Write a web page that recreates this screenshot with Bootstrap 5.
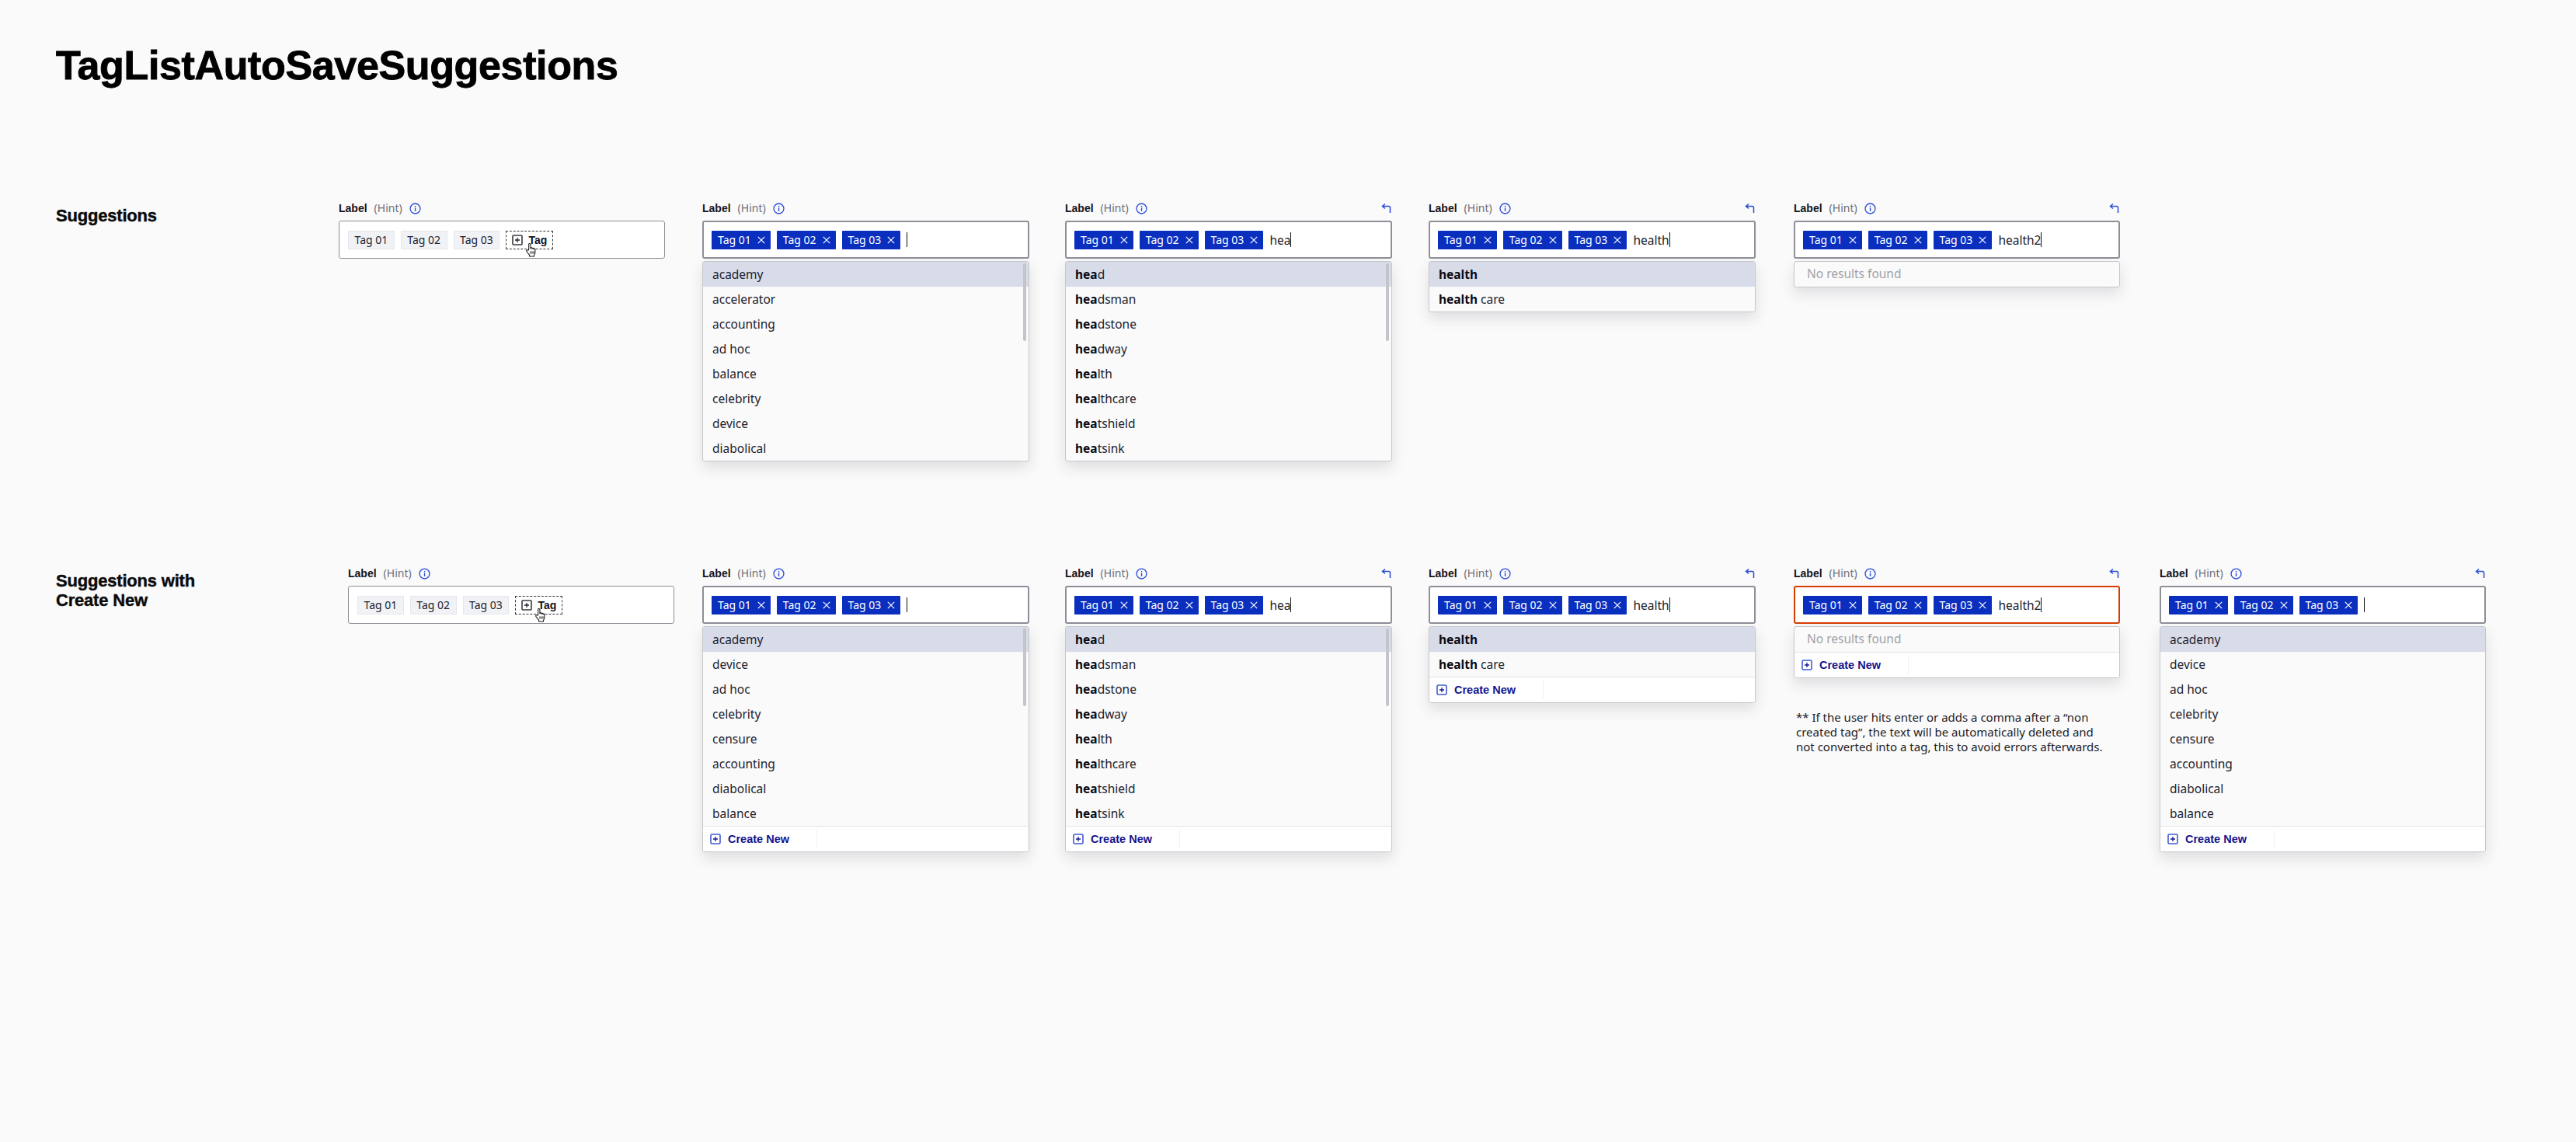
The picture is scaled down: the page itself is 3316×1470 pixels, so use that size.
<!DOCTYPE html>
<html lang="en"><head><meta charset="utf-8"><title>TagListAutoSaveSuggestions</title>
<link href="https://cdn.jsdelivr.net/npm/bootstrap@5.3.0/dist/css/bootstrap.min.css" rel="stylesheet">
<style>
body{background:#fafafa;color:#1c1c28;font-family:"Noto Sans","Liberation Sans",sans-serif;font-size:16px;min-height:1470px}
.page-wrap{padding:54px 0 0 72px}
.page-title{font:700 52px/60px "Liberation Sans",sans-serif;color:#000;margin:0 0 144px;letter-spacing:-.36px;-webkit-text-stroke:.9px #000}
.demo-row{display:grid;height:470px;align-items:start}
.demo-a{grid-template-columns:364px 468px 467px 468px 470px 420px}
.demo-b{grid-template-columns:376px 456px 467px 468px 470px 471px 420px}
.sec-name{font:700 22px/25px "Liberation Sans",sans-serif;color:#0a0a0a;padding-top:7px;margin:0;letter-spacing:-.2px;-webkit-text-stroke:.4px #0a0a0a}
.fld{width:421px}
.fld-w{width:420px}
.fld-head{height:26px;padding-bottom:6px;font-size:14px;line-height:20px}
.lab{font-family:"Liberation Sans",sans-serif;font-weight:700;font-size:14px;color:#14141e;margin-right:9px}
.hnt{color:#6d6e78;margin-right:9px}
.box{height:49px;background:#fff;border:2px solid #8e8f98;border-radius:3px;padding:0 10px;font-size:16px}
.box-idle{border-width:1px;border-color:#8e8f98;padding:0 11px}
.box-err{border-color:#d63c00}
.tg{height:24px;font-size:14px;line-height:22px;padding:0 7.5px;white-space:nowrap}
.tg-on{background:#0a2fbf;color:#fff;border-radius:1px;gap:8px;padding:0 7px 0 8px}
.tg-off{background:#f1f2f6;border:1px solid #e6e7ec;color:#22222e}
.tg-add{position:relative;border:1px dashed #333;padding:0 7px;font-weight:700;font-family:"Liberation Sans",sans-serif;font-size:14px;gap:7px;color:#14141e}
.hand{position:absolute;left:24px;top:14px}
.caret-bar{width:1px;height:19px;background:#111;margin-left:-8px}
.caret-free{margin-left:0}
.typed{line-height:24px;font-size:15.5px}
.sugg{margin-top:3px;border:1px solid #c6c7cc;border-radius:3px;background:#fafafa;box-shadow:0 8px 18px rgba(40,40,60,.13);overflow:hidden;position:relative}
.sugg .list-group-item{height:32px;line-height:32px;padding:0 12px;background:transparent;border:0;border-radius:0;font-size:15.5px;color:#22222e}
.sugg .list-group-item.hit{background:#d8dbe8}
.sugg b{font-weight:700;color:#0a0a14}
.none-row{height:32px;line-height:31px;padding:0 16px;color:#a0a1a8;font-size:15.5px}
.sbar{position:absolute;right:3px;top:2px;width:4px;height:100px;background:#c4c5ca;border-radius:2px}
.new-row{height:33px;background:#fff;border-top:1px solid #e2e3e6;padding-left:9px;gap:9px;font:700 14.5px/1 "Liberation Sans",sans-serif;color:#14148c}
.new-sep{width:1px;height:24px;background:#f0f0f2;margin-left:26px}
.foot-note{margin:41px 0 0 3px;font-size:15px;line-height:19px;color:#1c1c28;width:408px}
</style></head><body>
<svg width="0" height="0" class="d-none"><defs>
<symbol id="i-info" viewBox="0 0 16 16"><circle cx="8" cy="8" r="6.9" fill="none" stroke="#2a4bd7" stroke-width="1.4"/><rect x="7.3" y="7" width="1.5" height="4.6" fill="#2a4bd7"/><rect x="7.3" y="4.2" width="1.5" height="1.6" fill="#2a4bd7"/></symbol>
<symbol id="i-undo" viewBox="0 0 14 14"><path d="M5 1.5 1.5 4.5 5 7.5M1.5 4.5h8.2c1.2 0 1.8.7 1.8 1.8V13" fill="none" stroke="#2a4bd7" stroke-width="1.5"/></symbol>
<symbol id="i-x" viewBox="0 0 10 10"><path d="M.8.8l8.4 8.4M9.2.8.8 9.2" stroke="#fff" stroke-width="1.2" fill="none"/></symbol>
<symbol id="i-plus" viewBox="0 0 14 14"><rect x="1" y="1" width="12" height="12" rx="1" fill="none" stroke="#3a3a44" stroke-width="1.6"/><path d="M7 4v6M4 7h6" stroke="#1c1c28" stroke-width="1.3"/></symbol>
<symbol id="i-new" viewBox="0 0 14 14"><rect x="1" y="1" width="12" height="12" rx="1.5" fill="none" stroke="#3f5bd6" stroke-width="1.6"/><path d="M7 4v6M4 7h6" stroke="#14148c" stroke-width="1.3"/></symbol>
<symbol id="i-hand" viewBox="0 0 16 20"><path d="M5 10V2.6c0-1.6 2.4-1.6 2.4 0V8c0-1.3 2.2-1.3 2.2 0v.6c0-1.2 2.1-1.2 2.1 0v.7c0-1.1 2-1 2 .2v4.3c0 1.6-.6 2.5-1.4 3.6V19H6v-1.6c-1.2-1.5-3-3.6-4-5.2-.9-1.5.7-2.6 1.8-1.4z" fill="#fff" stroke="#111" stroke-width="1.1" stroke-linejoin="round"/><path d="M7.4 12v3.5M9.6 12v3.5M11.7 12v3.5" stroke="#111" stroke-width="1"/></symbol>
</defs></svg>
<main class="page-wrap">
<h1 class="page-title">TagListAutoSaveSuggestions</h1>

<section class="demo-row demo-a">
<h2 class="sec-name">Suggestions</h2>
<div class="fld-w">
<div class="fld-head d-flex align-items-center"><span class="lab">Label</span><span class="hnt">(Hint)</span><svg width="15" height="15"><use href="#i-info"/></svg></div>
<div class="box box-idle d-flex align-items-center gap-2"><span class="tg tg-off">Tag 01</span><span class="tg tg-off">Tag 02</span><span class="tg tg-off">Tag 03</span><span class="tg tg-add d-inline-flex align-items-center"><svg width="14" height="14"><use href="#i-plus"/></svg>Tag<svg class="hand" width="15" height="19"><use href="#i-hand"/></svg></span></div>
</div>
<div class="fld">
<div class="fld-head d-flex align-items-center"><span class="lab">Label</span><span class="hnt">(Hint)</span><svg width="15" height="15"><use href="#i-info"/></svg></div>
<div class="box d-flex align-items-center gap-2"><span class="tg tg-on d-inline-flex align-items-center">Tag 01<svg width="10" height="10"><use href="#i-x"/></svg></span><span class="tg tg-on d-inline-flex align-items-center">Tag 02<svg width="10" height="10"><use href="#i-x"/></svg></span><span class="tg tg-on d-inline-flex align-items-center">Tag 03<svg width="10" height="10"><use href="#i-x"/></svg></span><span class="caret-bar caret-free"></span></div>
<div class="sugg"><div class="list-group"><div class="list-group-item hit">academy</div><div class="list-group-item">accelerator</div><div class="list-group-item">accounting</div><div class="list-group-item">ad hoc</div><div class="list-group-item">balance</div><div class="list-group-item">celebrity</div><div class="list-group-item">device</div><div class="list-group-item">diabolical</div></div><span class="sbar"></span></div>
</div>
<div class="fld">
<div class="fld-head d-flex align-items-center"><span class="lab">Label</span><span class="hnt">(Hint)</span><svg width="15" height="15"><use href="#i-info"/></svg><svg class="ms-auto" width="14" height="14"><use href="#i-undo"/></svg></div>
<div class="box d-flex align-items-center gap-2"><span class="tg tg-on d-inline-flex align-items-center">Tag 01<svg width="10" height="10"><use href="#i-x"/></svg></span><span class="tg tg-on d-inline-flex align-items-center">Tag 02<svg width="10" height="10"><use href="#i-x"/></svg></span><span class="tg tg-on d-inline-flex align-items-center">Tag 03<svg width="10" height="10"><use href="#i-x"/></svg></span><span class="typed">hea</span><span class="caret-bar"></span></div>
<div class="sugg"><div class="list-group"><div class="list-group-item hit"><b>hea</b>d</div><div class="list-group-item"><b>hea</b>dsman</div><div class="list-group-item"><b>hea</b>dstone</div><div class="list-group-item"><b>hea</b>dway</div><div class="list-group-item"><b>hea</b>lth</div><div class="list-group-item"><b>hea</b>lthcare</div><div class="list-group-item"><b>hea</b>tshield</div><div class="list-group-item"><b>hea</b>tsink</div></div><span class="sbar"></span></div>
</div>
<div class="fld">
<div class="fld-head d-flex align-items-center"><span class="lab">Label</span><span class="hnt">(Hint)</span><svg width="15" height="15"><use href="#i-info"/></svg><svg class="ms-auto" width="14" height="14"><use href="#i-undo"/></svg></div>
<div class="box d-flex align-items-center gap-2"><span class="tg tg-on d-inline-flex align-items-center">Tag 01<svg width="10" height="10"><use href="#i-x"/></svg></span><span class="tg tg-on d-inline-flex align-items-center">Tag 02<svg width="10" height="10"><use href="#i-x"/></svg></span><span class="tg tg-on d-inline-flex align-items-center">Tag 03<svg width="10" height="10"><use href="#i-x"/></svg></span><span class="typed">health</span><span class="caret-bar"></span></div>
<div class="sugg"><div class="list-group"><div class="list-group-item hit"><b>health</b></div><div class="list-group-item"><b>health</b> care</div></div></div>
</div>
<div class="fld-w">
<div class="fld-head d-flex align-items-center"><span class="lab">Label</span><span class="hnt">(Hint)</span><svg width="15" height="15"><use href="#i-info"/></svg><svg class="ms-auto" width="14" height="14"><use href="#i-undo"/></svg></div>
<div class="box d-flex align-items-center gap-2"><span class="tg tg-on d-inline-flex align-items-center">Tag 01<svg width="10" height="10"><use href="#i-x"/></svg></span><span class="tg tg-on d-inline-flex align-items-center">Tag 02<svg width="10" height="10"><use href="#i-x"/></svg></span><span class="tg tg-on d-inline-flex align-items-center">Tag 03<svg width="10" height="10"><use href="#i-x"/></svg></span><span class="typed">health2</span><span class="caret-bar"></span></div>
<div class="sugg"><div class="none-row">No results found</div></div>
</div>
</section>

<section class="demo-row demo-b">
<h2 class="sec-name">Suggestions with<br>Create New</h2>
<div class="fld-w">
<div class="fld-head d-flex align-items-center"><span class="lab">Label</span><span class="hnt">(Hint)</span><svg width="15" height="15"><use href="#i-info"/></svg></div>
<div class="box box-idle d-flex align-items-center gap-2"><span class="tg tg-off">Tag 01</span><span class="tg tg-off">Tag 02</span><span class="tg tg-off">Tag 03</span><span class="tg tg-add d-inline-flex align-items-center"><svg width="14" height="14"><use href="#i-plus"/></svg>Tag<svg class="hand" width="15" height="19"><use href="#i-hand"/></svg></span></div>
</div>
<div class="fld">
<div class="fld-head d-flex align-items-center"><span class="lab">Label</span><span class="hnt">(Hint)</span><svg width="15" height="15"><use href="#i-info"/></svg></div>
<div class="box d-flex align-items-center gap-2"><span class="tg tg-on d-inline-flex align-items-center">Tag 01<svg width="10" height="10"><use href="#i-x"/></svg></span><span class="tg tg-on d-inline-flex align-items-center">Tag 02<svg width="10" height="10"><use href="#i-x"/></svg></span><span class="tg tg-on d-inline-flex align-items-center">Tag 03<svg width="10" height="10"><use href="#i-x"/></svg></span><span class="caret-bar caret-free"></span></div>
<div class="sugg"><div class="list-group"><div class="list-group-item hit">academy</div><div class="list-group-item">device</div><div class="list-group-item">ad hoc</div><div class="list-group-item">celebrity</div><div class="list-group-item">censure</div><div class="list-group-item">accounting</div><div class="list-group-item">diabolical</div><div class="list-group-item">balance</div></div><span class="sbar"></span><div class="new-row d-flex align-items-center"><svg width="14" height="14"><use href="#i-new"/></svg><span>Create New</span><span class="new-sep"></span></div></div>
</div>
<div class="fld">
<div class="fld-head d-flex align-items-center"><span class="lab">Label</span><span class="hnt">(Hint)</span><svg width="15" height="15"><use href="#i-info"/></svg><svg class="ms-auto" width="14" height="14"><use href="#i-undo"/></svg></div>
<div class="box d-flex align-items-center gap-2"><span class="tg tg-on d-inline-flex align-items-center">Tag 01<svg width="10" height="10"><use href="#i-x"/></svg></span><span class="tg tg-on d-inline-flex align-items-center">Tag 02<svg width="10" height="10"><use href="#i-x"/></svg></span><span class="tg tg-on d-inline-flex align-items-center">Tag 03<svg width="10" height="10"><use href="#i-x"/></svg></span><span class="typed">hea</span><span class="caret-bar"></span></div>
<div class="sugg"><div class="list-group"><div class="list-group-item hit"><b>hea</b>d</div><div class="list-group-item"><b>hea</b>dsman</div><div class="list-group-item"><b>hea</b>dstone</div><div class="list-group-item"><b>hea</b>dway</div><div class="list-group-item"><b>hea</b>lth</div><div class="list-group-item"><b>hea</b>lthcare</div><div class="list-group-item"><b>hea</b>tshield</div><div class="list-group-item"><b>hea</b>tsink</div></div><span class="sbar"></span><div class="new-row d-flex align-items-center"><svg width="14" height="14"><use href="#i-new"/></svg><span>Create New</span><span class="new-sep"></span></div></div>
</div>
<div class="fld">
<div class="fld-head d-flex align-items-center"><span class="lab">Label</span><span class="hnt">(Hint)</span><svg width="15" height="15"><use href="#i-info"/></svg><svg class="ms-auto" width="14" height="14"><use href="#i-undo"/></svg></div>
<div class="box d-flex align-items-center gap-2"><span class="tg tg-on d-inline-flex align-items-center">Tag 01<svg width="10" height="10"><use href="#i-x"/></svg></span><span class="tg tg-on d-inline-flex align-items-center">Tag 02<svg width="10" height="10"><use href="#i-x"/></svg></span><span class="tg tg-on d-inline-flex align-items-center">Tag 03<svg width="10" height="10"><use href="#i-x"/></svg></span><span class="typed">health</span><span class="caret-bar"></span></div>
<div class="sugg"><div class="list-group"><div class="list-group-item hit"><b>health</b></div><div class="list-group-item"><b>health</b> care</div></div><div class="new-row d-flex align-items-center"><svg width="14" height="14"><use href="#i-new"/></svg><span>Create New</span><span class="new-sep"></span></div></div>
</div>
<div class="fld-w">
<div class="fld-head d-flex align-items-center"><span class="lab">Label</span><span class="hnt">(Hint)</span><svg width="15" height="15"><use href="#i-info"/></svg><svg class="ms-auto" width="14" height="14"><use href="#i-undo"/></svg></div>
<div class="box box-err d-flex align-items-center gap-2"><span class="tg tg-on d-inline-flex align-items-center">Tag 01<svg width="10" height="10"><use href="#i-x"/></svg></span><span class="tg tg-on d-inline-flex align-items-center">Tag 02<svg width="10" height="10"><use href="#i-x"/></svg></span><span class="tg tg-on d-inline-flex align-items-center">Tag 03<svg width="10" height="10"><use href="#i-x"/></svg></span><span class="typed">health2</span><span class="caret-bar"></span></div>
<div class="sugg"><div class="none-row">No results found</div><div class="new-row d-flex align-items-center"><svg width="14" height="14"><use href="#i-new"/></svg><span>Create New</span><span class="new-sep"></span></div></div>
<p class="foot-note">** If the user hits enter or adds a comma after a “non created tag”, the text will be automatically deleted and not converted into a tag, this to avoid errors afterwards.</p>
</div>
<div class="fld-w">
<div class="fld-head d-flex align-items-center"><span class="lab">Label</span><span class="hnt">(Hint)</span><svg width="15" height="15"><use href="#i-info"/></svg><svg class="ms-auto" width="14" height="14"><use href="#i-undo"/></svg></div>
<div class="box d-flex align-items-center gap-2"><span class="tg tg-on d-inline-flex align-items-center">Tag 01<svg width="10" height="10"><use href="#i-x"/></svg></span><span class="tg tg-on d-inline-flex align-items-center">Tag 02<svg width="10" height="10"><use href="#i-x"/></svg></span><span class="tg tg-on d-inline-flex align-items-center">Tag 03<svg width="10" height="10"><use href="#i-x"/></svg></span><span class="caret-bar caret-free"></span></div>
<div class="sugg"><div class="list-group"><div class="list-group-item hit">academy</div><div class="list-group-item">device</div><div class="list-group-item">ad hoc</div><div class="list-group-item">celebrity</div><div class="list-group-item">censure</div><div class="list-group-item">accounting</div><div class="list-group-item">diabolical</div><div class="list-group-item">balance</div></div><div class="new-row d-flex align-items-center"><svg width="14" height="14"><use href="#i-new"/></svg><span>Create New</span><span class="new-sep"></span></div></div>
</div>
</section>
</main>
<script src="https://cdn.jsdelivr.net/npm/bootstrap@5.3.0/dist/js/bootstrap.bundle.min.js"></script>
</body></html>
